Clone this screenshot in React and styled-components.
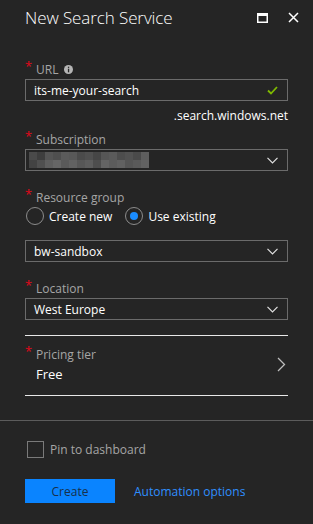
import React from "react";
import styled, { createGlobalStyle } from "styled-components";

const GlobalStyle = createGlobalStyle`
  html, body {
    margin: 0;
    padding: 0;
    background: #252525;
  }
  body {
    font-family: "Open Sans", "Noto Sans", sans-serif;
    color: #ffffff;
    -webkit-font-smoothing: antialiased;
  }
  * { box-sizing: border-box; }
`;

const Blade = styled.div`
  width: 313px;
  height: 524px;
  background: #252525;
  overflow: hidden;
`;

const Header = styled.div`
  height: 35px;
  display: flex;
  align-items: center;
  padding: 0 10px 0 25px;
`;

const Title = styled.h1`
  flex: 1;
  margin: 0;
  font-size: 17px;
  font-weight: 300;
  letter-spacing: -0.1px;
  color: #ffffff;
`;

const HeaderButton = styled.button`
  width: 20px;
  height: 20px;
  margin-left: 11px;
  padding: 0;
  border: 0;
  background: transparent;
  display: flex;
  align-items: center;
  justify-content: center;
`;

const Form = styled.div`
  padding: 25px 25px 0;
`;

const Label = styled.div`
  height: 19px;
  display: flex;
  align-items: center;
  font-size: 12px;
  color: #a6a6a6;
`;

const Star = styled.span`
  color: #e3081b;
  font-size: 13px;
  width: 11px;
  align-self: flex-start;
  line-height: 12px;
`;

const Box = styled.div`
  height: 22px;
  border: 1px solid #6b6b6b;
  display: flex;
  align-items: center;
  padding: 0 9px 0 8px;
  font-size: 12px;
  color: #ffffff;
`;

const BoxText = styled.span`
  flex: 1;
`;

const Hint = styled.div`
  height: 29px;
  line-height: 29px;
  text-align: right;
  font-size: 12px;
  color: #ffffff;
`;

const Mosaic = styled.div`
  flex: 1;
  display: grid;
  grid-template-columns: repeat(15, 8px);
  grid-auto-rows: 8px;
  margin-left: -5px;
`;

const Cell = styled.div`
  background: ${(p) => p.$c};
`;

const RadioRow = styled.div`
  height: 18px;
  display: flex;
  align-items: center;
  gap: 5px;
  margin: 0 0 15px 1px;
`;

const Radio = styled.span`
  width: 18px;
  height: 18px;
  border-radius: 50%;
  border: 1px solid #8c8c8c;
  display: flex;
  align-items: center;
  justify-content: center;
  &::after {
    content: "";
    width: 8px;
    height: 8px;
    border-radius: 50%;
    background: ${(p) => (p.$on ? "#1a8cff" : "transparent")};
  }
`;

const RadioText = styled.span`
  font-size: 12px;
  color: #ffffff;
  margin-right: 8px;
`;

const Spacer = styled.div`
  height: ${(p) => p.$h}px;
`;

const Rule = styled.div`
  height: 1px;
  background: #e8e8e8;
`;

const Picker = styled.div`
  display: flex;
  align-items: center;
  padding: 9px 2px 11px 0;
`;

const PickerBody = styled.div`
  flex: 1;
`;

const PickerValue = styled.div`
  height: 20px;
  line-height: 20px;
  padding-left: 11px;
  font-size: 13px;
  color: #ffffff;
`;

const Divider = styled.div`
  height: 1px;
  background: #5c5c5c;
  margin-top: 24px;
`;

const Footer = styled.div`
  padding: 20px 25px 0;
`;

const CheckRow = styled.label`
  display: flex;
  align-items: center;
  gap: 6px;
  padding-left: 2px;
  font-size: 12px;
  color: #a6a6a6;
`;

const CheckBox = styled.span`
  width: 17px;
  height: 17px;
  border: 1px solid #7a7a7a;
`;

const Actions = styled.div`
  display: flex;
  align-items: center;
  gap: 19px;
  margin-top: 21px;
`;

const CreateButton = styled.button`
  width: 90px;
  height: 24px;
  border: 0;
  background: #0a84ff;
  color: #17304a;
  font-family: inherit;
  font-size: 12px;
  padding: 0;
`;

const Link = styled.a`
  color: #2f8fff;
  font-size: 12px;
  text-decoration: none;
`;

const Chevron = () => (
  <svg width="11" height="7" viewBox="0 0 11 7">
    <path d="M0.5 0.8 L5.5 5.8 L10.5 0.8" fill="none" stroke="#e0e0e0" strokeWidth="1.2" />
  </svg>
);

const mosaicColors = [
  "#4a4a4a", "#3e3e3e", "#555555", "#4f4f4f", "#5b5b5b", "#585858", "#4b4b4b", "#505050",
  "#464646", "#565656", "#5a5a5a", "#4d4d4d", "#525252", "#4a4a4a", "#5e5e5e",
  "#434343", "#505050", "#5f5f5f", "#666666", "#5a5a5a", "#626262", "#575757", "#5d5d5d",
  "#4e4e4e", "#646464", "#5c5c5c", "#616161", "#555555", "#5a5a5a", "#626262",
];

const Required = ({ children }) => (
  <Label>
    <Star>*</Star>
    {children}
  </Label>
);

export default function App() {
  return (
    <Blade>
      <GlobalStyle />
      <Header>
        <Title>New Search Service</Title>
        <HeaderButton aria-label="maximize">
          <svg width="11" height="10" viewBox="0 0 11 10">
            <rect x="0.75" y="0.75" width="9.5" height="8.5" fill="none" stroke="#fff" strokeWidth="1.5" />
            <rect x="0" y="0" width="11" height="3" fill="#fff" />
          </svg>
        </HeaderButton>
        <HeaderButton aria-label="close">
          <svg width="11" height="11" viewBox="0 0 11 11">
            <path d="M1 1 L10 10 M10 1 L1 10" stroke="#fff" strokeWidth="1.5" />
          </svg>
        </HeaderButton>
      </Header>

      <Form>
        <Required>
          URL
          <svg width="9" height="9" viewBox="0 0 9 9" style={{ marginLeft: 6 }}>
            <circle cx="4.5" cy="4.5" r="4.5" fill="#b5b5b5" />
            <rect x="3.9" y="3.7" width="1.3" height="3.6" fill="#252525" />
            <rect x="3.9" y="1.7" width="1.3" height="1.2" fill="#252525" />
          </svg>
        </Required>
        <Box>
          <BoxText>its-me-your-search</BoxText>
          <svg width="11" height="9" viewBox="0 0 11 9">
            <path d="M1 4.5 L4 7.5 L10 1" fill="none" stroke="#7fba00" strokeWidth="1.8" />
          </svg>
        </Box>
        <Hint>.search.windows.net</Hint>

        <Required>Subscription</Required>
        <Box>
          <Mosaic>
            {mosaicColors.map((c, i) => (
              <Cell key={i} $c={c} />
            ))}
          </Mosaic>
          <Chevron />
        </Box>
        <Spacer $h={17} />

        <Required>Resource group</Required>
        <RadioRow>
          <Radio />
          <RadioText>Create new</RadioText>
          <Radio $on />
          <RadioText>Use existing</RadioText>
        </RadioRow>
        <Box>
          <BoxText>bw-sandbox</BoxText>
          <Chevron />
        </Box>
        <Spacer $h={17} />

        <Required>Location</Required>
        <Box>
          <BoxText>West Europe</BoxText>
          <Chevron />
        </Box>
        <Spacer $h={15} />
        <Rule />
        <Picker>
          <PickerBody>
            <Required>Pricing tier</Required>
            <PickerValue>Free</PickerValue>
          </PickerBody>
          <svg width="9" height="15" viewBox="0 0 9 15">
            <path d="M1 1 L7.5 7.5 L1 14" fill="none" stroke="#bdbdbd" strokeWidth="1.3" />
          </svg>
        </Picker>
        <Rule />
      </Form>
      <Divider />

      <Footer>
        <CheckRow>
          <CheckBox />
          Pin to dashboard
        </CheckRow>
        <Actions>
          <CreateButton>Create</CreateButton>
          <Link href="#">Automation options</Link>
        </Actions>
      </Footer>
    </Blade>
  );
}
